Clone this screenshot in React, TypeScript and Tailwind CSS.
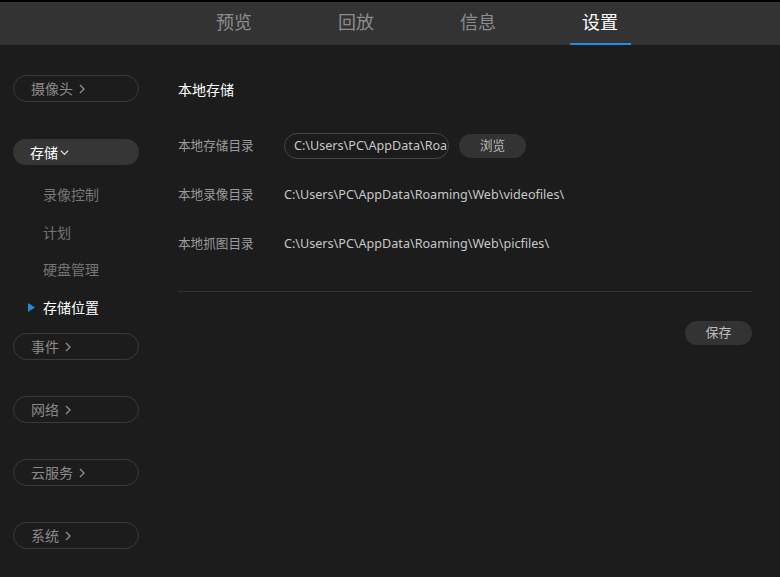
import React from 'react';

const font = { fontFamily: '"Noto Sans", "Noto Sans CJK SC", sans-serif' };

const tabs = ['预览', '回放', '信息', '设置'];

const Pill = ({ label, open = false }: { label: string; open?: boolean }) => (
    <div
        className={
            open
                ? 'h-[26px] w-[126px] rounded-full bg-[#363636] flex items-center pl-[17px] text-[14px] text-white'
                : 'h-[27px] w-[126px] rounded-full border border-[#3a3a3a] flex items-center pl-[17px] text-[14px] text-[#8a8a8a]'
        }
    >
        <span>{label}</span>
        {open ? (
            <svg width="11" height="11" viewBox="0 0 12 12" className="ml-[1px] mt-[1px]">
                <path d="M2 4l4 4 4-4" stroke="#e5e5e5" strokeWidth="1.4" fill="none" />
            </svg>
        ) : (
            <svg width="10" height="12" viewBox="0 0 10 12" className="ml-[4px]">
                <path d="M3 2l4 4-4 4" stroke="#8a8a8a" strokeWidth="1.4" fill="none" />
            </svg>
        )}
    </div>
);

const SubItem = ({ label, active = false }: { label: string; active?: boolean }) => (
    <div className="h-[37.5px] flex items-center relative pl-[30px] text-[14px]">
        {active && (
            <svg width="7" height="9" viewBox="0 0 7 9" className="absolute left-[15px] top-[14px]">
                <path d="M0 0l7 4.5L0 9z" fill="#1e88e5" />
            </svg>
        )}
        <span className={active ? 'text-white' : 'text-[#767676]'}>{label}</span>
    </div>
);

const App = () => {
    return (
        <div className="w-[780px] h-[577px] bg-[#1c1c1c] overflow-hidden" style={font}>
            <div className="h-[2px] bg-black" />
            <div className="h-[43px] bg-[#333333] flex pl-[173px]">
                {tabs.map((t, i) => (
                    <div key={t} className="w-[122px] flex flex-col items-center">
                        <div className={`flex-1 flex items-center text-[18px] ${i === 3 ? 'text-white' : 'text-[#8c8c8c]'}`}>{t}</div>
                        <div className={`h-[2px] w-[61px] ${i === 3 ? 'bg-[#1e8fe6]' : ''}`} />
                    </div>
                ))}
            </div>

            <div className="flex">
                <div className="w-[165px] pl-[13px] pt-[30px] flex flex-col">
                    <Pill label="摄像头" />
                    <div className="mt-[37px]">
                        <Pill label="存储" open />
                    </div>
                    <div className="mt-[11px]">
                        <SubItem label="录像控制" />
                        <SubItem label="计划" />
                        <SubItem label="硬盘管理" />
                        <SubItem label="存储位置" active />
                    </div>
                    <div className="mt-[7px] flex flex-col gap-[36px]">
                        <Pill label="事件" />
                        <Pill label="网络" />
                        <Pill label="云服务" />
                        <Pill label="系统" />
                    </div>
                </div>

                <div className="flex-1 pl-[13px] pr-[28px]">
                    <div className="pt-[34px] text-[14px] text-white h-[22px] box-content">本地存储</div>
                    <div className="mt-[32px] flex items-center h-[26px] text-[12.6px]">
                        <span className="w-[106px] text-[#9a9a9a]">本地存储目录</span>
                        <div className="w-[165px] h-[26px] rounded-full border border-[#454545] flex items-center pl-[9px] whitespace-nowrap text-[#c8c8c8]">
                            <span>C:\Users\PC\AppData\Roa</span>
                        </div>
                        <div className="ml-[10px] w-[67px] h-[24px] rounded-full bg-[#333333] flex items-center justify-center text-[#bdbdbd]">浏览</div>
                    </div>
                    <div className="mt-[23px] flex items-center h-[26px] text-[12.6px]">
                        <span className="w-[106px] text-[#9a9a9a]">本地录像目录</span>
                        <span className="text-[#c8c8c8]">C:\Users\PC\AppData\Roaming\Web\videofiles\</span>
                    </div>
                    <div className="mt-[23px] flex items-center h-[26px] text-[12.6px]">
                        <span className="w-[106px] text-[#9a9a9a]">本地抓图目录</span>
                        <span className="text-[#c8c8c8]">C:\Users\PC\AppData\Roaming\Web\picfiles\</span>
                    </div>
                    <div className="mt-[34px] h-px bg-[#333333]" />
                    <div className="mt-[29px] flex justify-end">
                        <div className="w-[67px] h-[24px] rounded-full bg-[#333333] flex items-center justify-center text-[13px] text-[#bdbdbd]">保存</div>
                    </div>
                </div>
            </div>
        </div>
    );
};

export default App;
